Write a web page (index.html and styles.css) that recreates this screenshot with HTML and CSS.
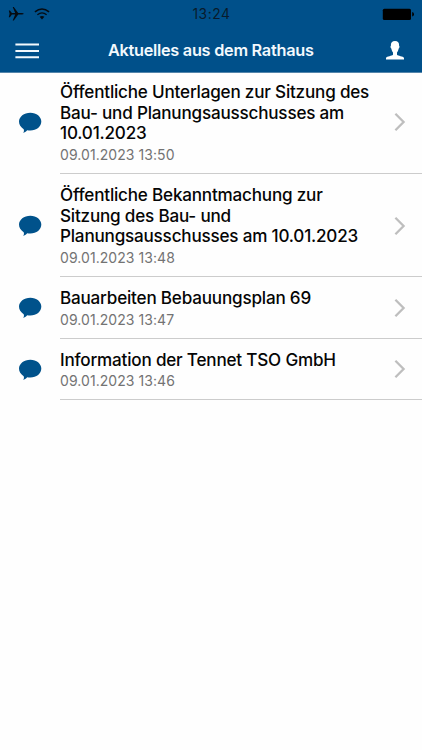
FILE: index.html
```
<!DOCTYPE html>
<html lang="de">
<head>
<meta charset="utf-8">
<title>Aktuelles aus dem Rathaus</title>
<link rel="stylesheet" href="styles.css">
</head>
<body>
<svg class="sprite" aria-hidden="true">
  <symbol id="bubble" viewBox="0 0 24 22"><path d="M12.3 0.7C18.6 0.7 23.3 4.6 23.3 9.6S18.6 18.6 12.3 18.6C11.2 18.6 10.2 18.5 9.2 18.3C8 19.8 6.5 20.6 5 21.1C6 19.9 6.2 18.5 5.7 17.2C2.7 15.4 1 12.7 1 9.6C1 4.6 6 0.7 12.3 0.7Z"/></symbol>
  <symbol id="chevron" viewBox="0 0 12 20"><path d="M1.4 1.7L9.6 10L1.4 18.3"/></symbol>
</svg>
<header class="header">
  <div class="status">
    <div class="signals">
      <svg class="plane" viewBox="0 0 16 16"><path d="M0.8 4.4H1.9L3.9 7H7.2L4.7 1H5.8L10.2 7H13.9Q15.7 7.2 15.7 7.8Q15.7 8.4 13.9 8.6H10.2L5.8 14.6H4.7L7.2 8.6H3.9L1.9 11.2H0.8L1.6 7.8Z"/></svg>
      <svg class="wifi" viewBox="0 0 16 12"><path d="M0.9 3.9Q8 -2 15.1 3.9M3.4 6.7Q8 3 12.6 6.7"/><path class="dot" d="M5.6 8.8Q8 7.1 10.4 8.8L8 11.5Z"/></svg>
    </div>
    <time class="clock">13:24</time>
    <svg class="battery" viewBox="0 0 33 13"><rect x="0.8" y="0.8" width="28.2" height="11.2" rx="1.5"/><path d="M30.2 4Q32 4.5 32 6.3T30.2 8.6Z"/></svg>
  </div>
  <nav class="navbar">
    <svg class="menu" viewBox="0 0 24 16"><path d="M0.4 1.5H24M0.4 8H24M0.4 14.2H24"/></svg>
    <h1 class="title">Aktuelles aus dem Rathaus</h1>
    <svg class="user" viewBox="0 0 18 20"><path d="M9 0.9C11.8 0.9 13.4 2.6 13.1 5.8C13.8 6.2 13.5 8.1 12.7 8.6C12.3 10.6 11.7 11.8 11 12.5V14.8C12 16.2 17.1 16 18 18V19.4H0V18C0.9 16 6 16.2 7 14.8V12.5C6.3 11.8 5.7 10.6 5.3 8.6C4.5 8.1 4.2 6.2 4.9 5.8C4.6 2.6 6.2 0.9 9 0.9Z"/></svg>
  </nav>
</header>
<main class="list">
  <article class="row row-first">
    <svg class="bubble"><use href="#bubble"/></svg>
    <div class="content"><div class="text"><h2>Öffentliche Unterlagen zur Sitzung des<br>Bau- und Planungsausschusses am<br>10.01.2023</h2><p>09.01.2023 13:50</p></div><svg class="chevron"><use href="#chevron"/></svg></div>
  </article>
  <article class="row row-second">
    <svg class="bubble"><use href="#bubble"/></svg>
    <div class="content"><div class="text"><h2>Öffentliche Bekanntmachung zur<br>Sitzung des Bau- und<br>Planungsausschusses am 10.01.2023</h2><p>09.01.2023 13:48</p></div><svg class="chevron"><use href="#chevron"/></svg></div>
  </article>
  <article class="row row-third">
    <svg class="bubble"><use href="#bubble"/></svg>
    <div class="content"><div class="text"><h2>Bauarbeiten Bebauungsplan 69</h2><p>09.01.2023 13:47</p></div><svg class="chevron"><use href="#chevron"/></svg></div>
  </article>
  <article class="row row-fourth">
    <svg class="bubble"><use href="#bubble"/></svg>
    <div class="content"><div class="text"><h2>Information der Tennet TSO GmbH</h2><p>09.01.2023 13:46</p></div><svg class="chevron"><use href="#chevron"/></svg></div>
  </article>
</main>
</body>
</html>
```
FILE: styles.css
```
* { box-sizing: border-box; }
html { background: #fefefe; }
body { margin: 0; color: #050505; font-family: Inter, "Liberation Sans", sans-serif; }
h1, h2, p { margin: 0; }
svg { display: block; flex: none; }
.sprite { display: none; }
.header { height: 73px; background: #00508a; border-bottom: 1px solid #5485ab; }
.status { height: 28px; display: grid; grid-template-columns: 1fr auto 1fr; align-items: center; padding: 0 7px 0 8px; }
.signals { display: flex; align-items: center; gap: 10px; }
.plane { width: 16px; height: 16px; fill: #050b12; }
.wifi { width: 16px; height: 12px; fill: none; stroke: #050b12; stroke-width: 1.4; }
.wifi .dot { fill: #050b12; stroke: none; }
.clock { color: #091b2b; font-size: 13.8px; letter-spacing: 0.6px; line-height: 28px; }
.battery { width: 33px; height: 13px; justify-self: end; fill: #000; }
.navbar { height: 44px; display: grid; grid-template-columns: 1fr auto 1fr; align-items: center; padding: 0 18.5px 0 15px; }
.menu { width: 24px; height: 16px; margin-top: 1px; fill: none; stroke: #f3f9fd; stroke-width: 1.9; }
.title { color: #f3f9fd; font-size: 16.3px; font-weight: 600; letter-spacing: -0.27px; line-height: 44px; padding-left: 3px; white-space: nowrap; }
.user { width: 18px; height: 20px; justify-self: end; fill: #fff; }
.row { display: flex; align-items: center; padding-left: 18px; }
.row-first { height: 101px; }
.row-second { height: 103px; }
.row-third { height: 62px; }
.row-fourth { height: 61px; }
.bubble { width: 24px; height: 22px; margin-right: 18px; fill: #00528b; }
.row-first .bubble, .row-first .chevron { margin-bottom: 2px; }
.content { height: 100%; flex: 1; display: flex; align-items: center; justify-content: space-between; padding-right: 16px; border-bottom: 1px solid #ccc; }
.text { padding-top: 3px; white-space: nowrap; }
.row-first .text { padding-top: 1px; }
h2 { font-size: 17.1px; font-weight: 500; line-height: 20.7px; letter-spacing: -0.2px; }
p { color: #737373; font-size: 14px; line-height: 20px; letter-spacing: 0.06px; margin-top: 1px; }
.chevron { width: 12px; height: 20px; fill: none; stroke: #bebebe; stroke-width: 2.3; }
.row-second .chevron { margin-top: 2px; }
```
